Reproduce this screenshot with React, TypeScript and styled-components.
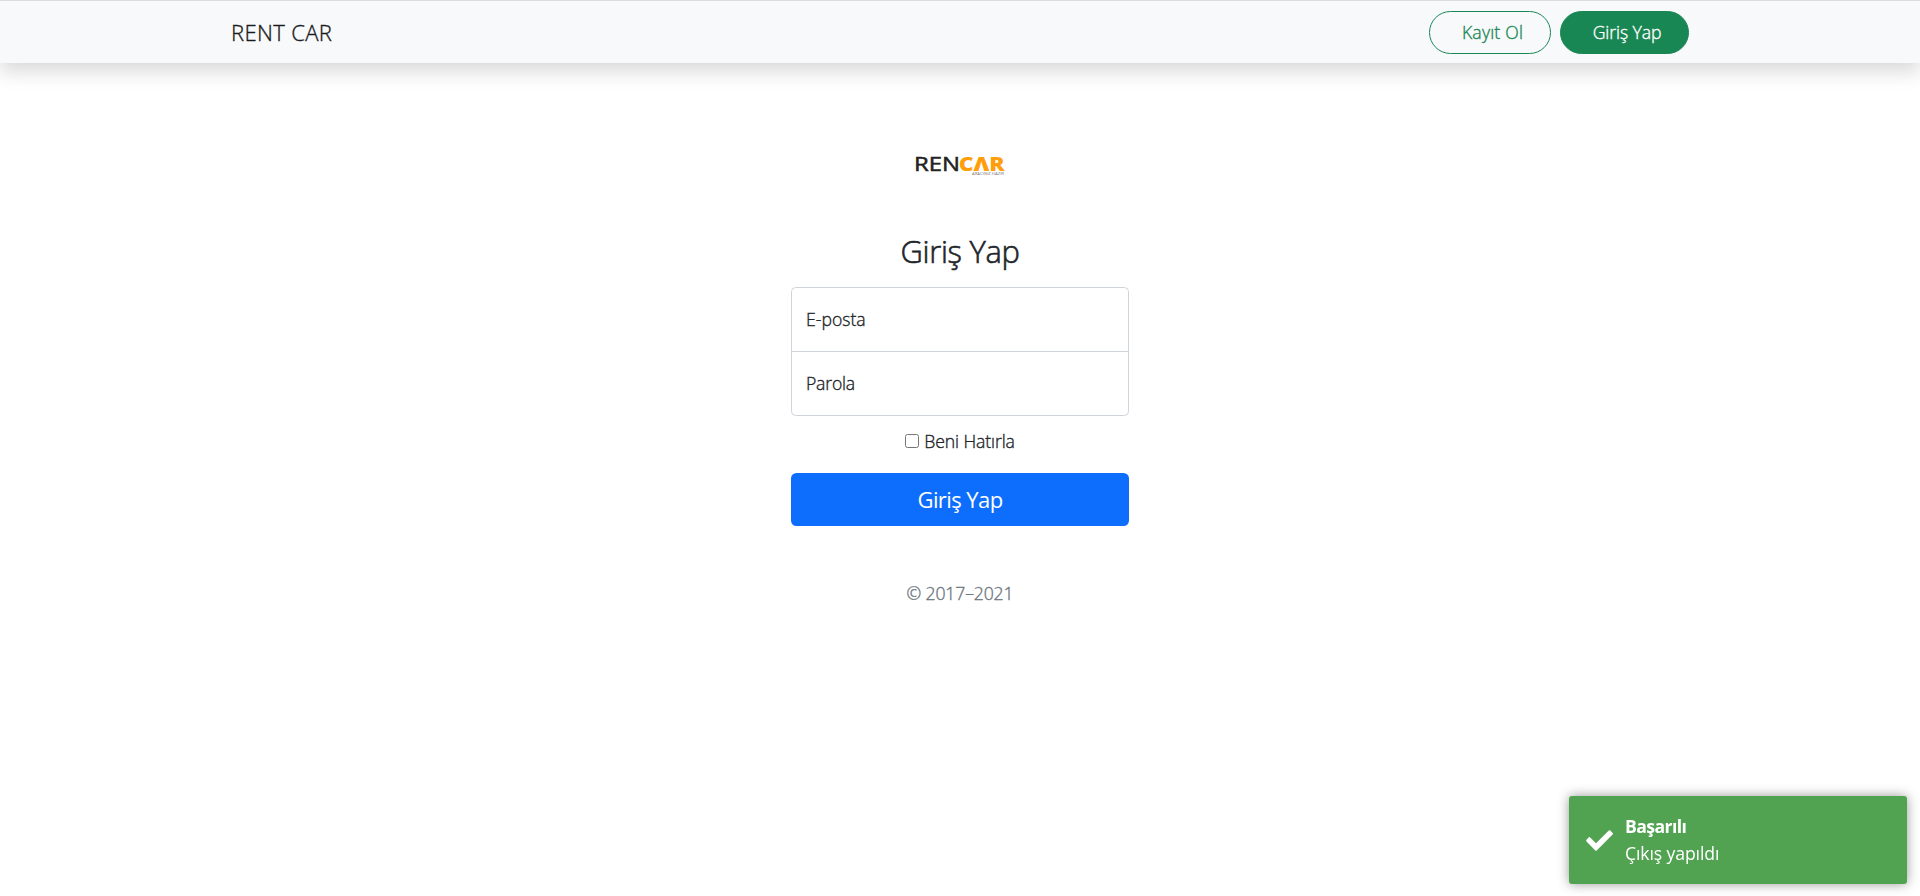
import React from "react";
import styled, { createGlobalStyle } from "styled-components";

const GlobalStyle = createGlobalStyle`
  *, *::before, *::after { box-sizing: border-box; }
  html { font-size: 18px; }
  body {
    margin: 0;
    background: #fff;
    color: #212529;
    font-family: "Open Sans", "Noto Sans", sans-serif;
    font-size: 1rem;
    font-weight: 300;
    line-height: 1.5;
  }
`;

const Page = styled.div`
  min-height: 896px;
  display: flex;
  flex-direction: column;
`;

const Navbar = styled.header`
  height: 63px;
  border-top: 1px solid #dadcde;
  background: #f8f9fb;
  box-shadow: 0 0.5rem 1rem rgba(0, 0, 0, 0.15);
`;

const NavContainer = styled.div`
  width: 1458px;
  height: 100%;
  margin: 0 auto;
  padding-top: 1px;
  display: flex;
  align-items: center;
  justify-content: space-between;
`;

const Text = styled.span<{ $spacing?: number; $stroke?: number }>`
  font-size: 0.98em;
  letter-spacing: ${(p) => p.$spacing ?? 0}px;
  -webkit-text-stroke: ${(p) => p.$stroke ?? 0.35}px currentColor;
  white-space: nowrap;
`;

const Brand = styled.a`
  color: #191b1d;
  font-size: 22.5px;
`;

const NavActions = styled.nav`
  display: flex;
  gap: 9px;
`;

const NavButton = styled.button<{ $filled?: boolean; $width: number }>`
  width: ${(p) => p.$width}px;
  height: 43px;
  padding: 0 0 1px 5px;
  border: 1px solid #198754;
  border-radius: 22px;
  background: ${(p) => (p.$filled ? "#198754" : "transparent")};
  color: ${(p) => (p.$filled ? "#fff" : "#198754")};
  font: inherit;
`;

const SignIn = styled.main`
  width: 338px;
  margin: 82px auto 0;
  display: flex;
  flex-direction: column;
  align-items: center;
`;

const Logo = styled.svg`
  width: 100px;
  height: 40px;
  display: block;
`;

const Title = styled.h1`
  margin: 47px 0 17px;
  font-size: 31.5px;
  font-weight: 300;
  line-height: 38px;
`;

const Fields = styled.div`
  width: 100%;
  height: 129px;
  border: 1px solid #ced4da;
  border-radius: 4.5px;
  overflow: hidden;
`;

const Field = styled.label`
  height: 63px;
  display: flex;
  align-items: center;
  padding: 0 14px;
  position: relative;
  & + & {
    height: 64px;
    border-top: 1px solid #ced4da;
  }
`;

const FieldInput = styled.input`
  position: absolute;
  inset: 0;
  width: 100%;
  border: 0;
  padding: 0 14px;
  background: transparent;
  font: inherit;
  outline: none;
`;

const Remember = styled.label`
  margin-top: 12px;
  height: 27px;
  display: flex;
  align-items: center;
  gap: 5px;
`;

const Check = styled.input`
  appearance: none;
  width: 14px;
  height: 14px;
  margin: 0 0 1px;
  border: 1px solid #767676;
  border-radius: 2.5px;
  background: #fff;
`;

const Submit = styled.button`
  width: 100%;
  height: 53px;
  margin-top: 18px;
  padding: 0;
  border: 0;
  border-radius: 5.4px;
  background: #0d6efd;
  color: #fff;
  font: inherit;
  font-size: 22.5px;
  font-weight: 400;
`;

const Copyright = styled.p`
  margin: 54px 0 0;
  color: #6c757d;
`;

const Toast = styled.aside`
  position: fixed;
  right: 13px;
  bottom: 12px;
  width: 338px;
  height: 88px;
  padding: 17px;
  display: flex;
  align-items: center;
  gap: 12px;
  border-radius: 3px;
  background: #51a351;
  box-shadow: 0 0 12px #999;
  color: #fff;
`;

const ToastIcon = styled.svg`
  width: 27px;
  height: 21px;
  flex: none;
`;

const ToastBody = styled.div`
  display: flex;
  flex-direction: column;
  font-weight: 400;
`;

const ToastTitle = styled.strong`
  font-weight: 700;
`;

export default function App() {
  return (
    <>
      <GlobalStyle />
      <Page>
        <Navbar>
          <NavContainer>
            <Brand><Text $spacing={0.35}>RENT CAR</Text></Brand>
            <NavActions>
              <NavButton $width={122}><Text $spacing={0.2}>Kayıt Ol</Text></NavButton>
              <NavButton $width={129} $filled><Text $spacing={-0.1}>Giriş Yap</Text></NavButton>
            </NavActions>
          </NavContainer>
        </Navbar>
        <SignIn>
          <Logo viewBox="0 0 100 40" role="img" aria-label="Rencar">
            <g fontFamily="Open Sans, sans-serif" fontSize="19.5">
              <text x="4" y="26" fontWeight="400" fill="#222" stroke="#222" strokeWidth="0.5" textLength="46" lengthAdjust="spacingAndGlyphs">REN</text>
              <text x="48.8" y="26" fontWeight="800" fill="#ff9d0a" textLength="46" lengthAdjust="spacingAndGlyphs">CΛR</text>
            </g>
            <text x="62" y="30" fontFamily="Open Sans, sans-serif" fontSize="3.6" fontWeight="400" fill="#777" textLength="32" lengthAdjust="spacingAndGlyphs">ARACINIZ HAZIR</text>
          </Logo>
          <Title><Text $spacing={-0.28} $stroke={0.6}>Giriş Yap</Text></Title>
          <Fields>
            <Field><Text $spacing={0}>E-posta</Text><FieldInput type="email" /></Field>
            <Field><Text $spacing={-0.2}>Parola</Text><FieldInput type="password" /></Field>
          </Fields>
          <Remember><Check type="checkbox" /><Text $spacing={-0.1}>Beni Hatırla</Text></Remember>
          <Submit><Text $spacing={-0.6} $stroke={0}>Giriş Yap</Text></Submit>
          <Copyright><Text $spacing={-0.15}>© 2017–2021</Text></Copyright>
        </SignIn>
        <Toast>
          <ToastIcon viewBox="0 0 27 21">
            <path d="M0.5 9.8 2.8 7.3Q3.5 6.7 4.2 7.4L10 13.3 22.8 0.6Q23.6-.1 24.3.6L26.7 3.1Q27.3 3.8 26.6 4.5L10.7 20.4Q10 21 9.3 20.4L.5 11.4Q-.2 10.6.5 9.8Z" fill="#fff" />
          </ToastIcon>
          <ToastBody>
            <ToastTitle><Text $spacing={-0.6} $stroke={0}>Başarılı</Text></ToastTitle>
            <Text $spacing={-0.12} $stroke={0}>Çıkış yapıldı</Text>
          </ToastBody>
        </Toast>
      </Page>
    </>
  );
}
